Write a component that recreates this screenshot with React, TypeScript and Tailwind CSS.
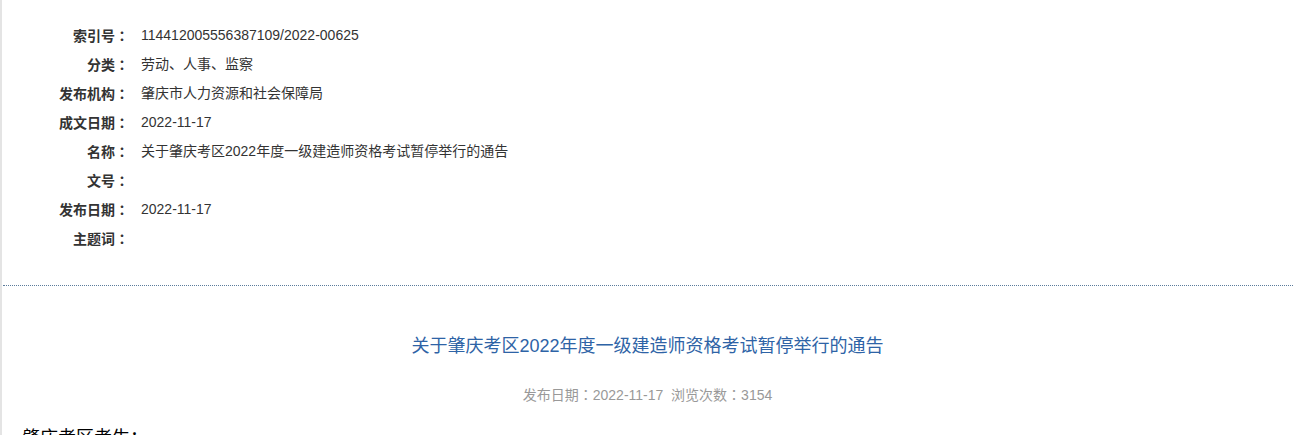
import React from "react";

const rows: [string, string][] = [
  ["索引号", "114412005556387109/2022-00625"],
  ["分类", "劳动、人事、监察"],
  ["发布机构", "肇庆市人力资源和社会保障局"],
  ["成文日期", "2022-11-17"],
  ["名称", "关于肇庆考区2022年度一级建造师资格考试暂停举行的通告"],
  ["文号", ""],
  ["发布日期", "2022-11-17"],
  ["主题词", ""],
];

const colonFont = { fontFamily: '"Noto Sans CJK TC", sans-serif' };

export default function App() {
  return (
    <div
      className="w-full h-[435px] overflow-hidden bg-white border-l-[2px] border-[#e4e4e4] text-[#333]"
      style={{ fontFamily: '"Liberation Sans", "Noto Sans CJK SC", sans-serif' }}
    >
      <div className="pt-[21px] flex flex-col">
        {rows.map(([k, v]) => (
          <div key={k} className="flex h-[29px] items-center text-[14px]">
            <div className="w-[127px] text-right font-bold text-[#333]">
              {k}
              <span style={colonFont}>：</span>
            </div>
            <div className="ml-[12px] text-[#333]">{v}</div>
          </div>
        ))}
      </div>
      <div className="mt-[32px] ml-[1px] border-t border-dotted border-[#5b7b9b]" />
      <div className="mt-[45px] text-center text-[18px] leading-[30px] text-[#2e63a6]">
        关于肇庆考区2022年度一级建造师资格考试暂停举行的通告
      </div>
      <div className="mt-[23px] text-center text-[14px] leading-[20px] text-[#999]">
        发布日期<span style={colonFont}>：</span>2022-11-17&nbsp;&nbsp;浏览次数
        <span style={colonFont}>：</span>3154
      </div>
      <div className="mt-[23px] ml-[20px] text-[18px] leading-[20px] text-black">
        肇庆考区考生：
      </div>
    </div>
  );
}
